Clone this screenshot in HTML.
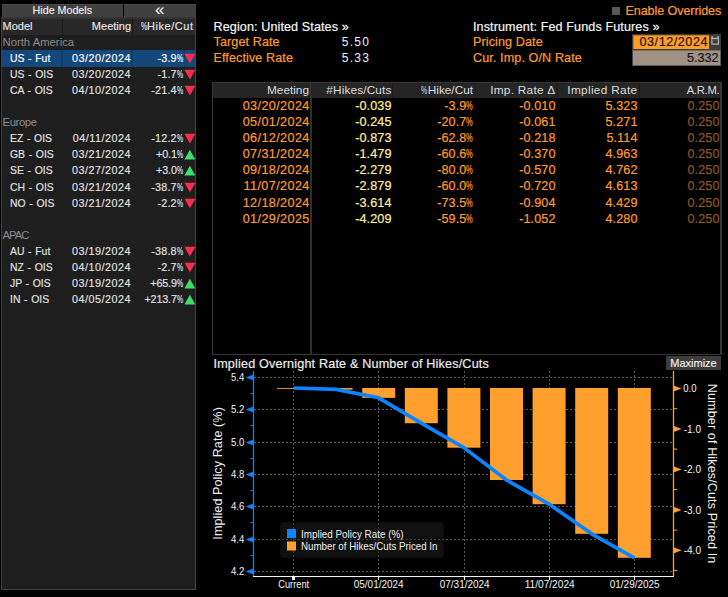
<!DOCTYPE html>
<html lang="en"><head><meta charset="utf-8"><title>World Interest Rate Probability</title>
<style>
html,body{margin:0;padding:0;background:#000;}
body{width:728px;height:597px;position:relative;overflow:hidden;font-family:"Liberation Sans",sans-serif;color:#e6e6e6;}
.a{position:absolute;white-space:nowrap;line-height:16px;height:16px;}
.b{position:absolute;}
.lp{font-size:10.8px;color:#e2e2e2;-webkit-text-stroke:.15px;}
.lh{font-size:11px;color:#e8e8e8;-webkit-text-stroke:.12px;}
.grp{font-size:11.3px;color:#8c8c8c;}
.rt{font-size:12.6px;letter-spacing:.1px;-webkit-text-stroke:.2px;}
.o{color:#ff9d2b;}
.w{color:#f4f4f4;}
.y{color:#fff09a;}
.d{color:#93591c;}
.hd{color:#dedede;font-size:11.8px;}
.pc{display:inline-block;width:6.4px;transform:scaleX(.64);transform-origin:0 50%;}
.pcb{display:inline-block;width:6.6px;transform:scaleX(.59);transform-origin:0 50%;}
</style></head>
<body>
<div class="b" style="left:1px;top:17px;width:195px;height:573px;background:#1e1e1e;box-sizing:border-box;border:1px solid #424242;border-top:2px solid #343434;"></div>
<div class="b" style="left:2px;top:4px;width:121px;height:13px;background:#404040;border-top:1px solid #4b4b4b;box-sizing:border-box;"></div>
<div class="b" style="left:124px;top:4px;width:72px;height:13px;background:#404040;border-top:1px solid #4b4b4b;box-sizing:border-box;"></div>
<div class="a lh" style="left:-37.7px;width:200px;text-align:center;top:1.5px;color:#f2f2f2;font-size:10.7px;letter-spacing:0;">Hide Models</div>
<div class="a lh" style="left:59.8px;width:200px;text-align:center;top:1.8px;color:#f2f2f2;font-size:17px;">&laquo;</div>
<div class="b" style="left:2px;top:19px;width:193px;height:16px;background:#282828;"></div>
<div class="b" style="left:62px;top:19px;width:1px;height:16px;background:#1b1b1b;"></div>
<div class="b" style="left:132px;top:19px;width:1px;height:16px;background:#1b1b1b;"></div>
<div class="a lh" style="left:2.5px;top:18.3px;">Model</div>
<div class="a lh" style="right:597px;text-align:right;top:18.3px;">Meeting</div>
<div class="a lh" style="right:534.4px;text-align:right;top:18.3px;letter-spacing:.55px;"><span class="pc">%</span>Hike/Cut</div>
<div class="b" style="left:2px;top:50px;width:193px;height:16.5px;background:#14477a;"></div>
<div class="b" style="left:61px;top:50px;width:2px;height:16.5px;background:#103d69;"></div>
<div class="b" style="left:131px;top:50px;width:2px;height:16.5px;background:#103d69;"></div>
<div class="b" style="left:184px;top:50px;width:1px;height:16.5px;background:#103d69;"></div>
<div class="a grp" style="left:2.5px;top:34px;">North America</div>
<div class="a lp" style="left:10px;top:50.5px;color:#fff;font-size:10.4px;word-spacing:.8px;">US - Fut</div>
<div class="a lp" style="right:597px;text-align:right;top:50px;color:#fff;letter-spacing:.5px;">03/20/2024</div>
<div class="a lp" style="right:544.8px;text-align:right;top:50px;color:#fff;letter-spacing:.2px;">-3.9<span class="pc">%</span></div>
<svg class="b" style="left:184px;top:50px" width="11" height="16"><polygon points="0.4,3.8 11.4,3.8 5.9,13.6" fill="#f92c50"/></svg>
<div class="a lp" style="left:10px;top:66.5px;font-size:10.4px;word-spacing:.8px;">US - OIS</div>
<div class="a lp" style="right:597px;text-align:right;top:66px;letter-spacing:.5px;">03/20/2024</div>
<div class="a lp" style="right:544.8px;text-align:right;top:66px;letter-spacing:.2px;">-1.7<span class="pc">%</span></div>
<svg class="b" style="left:184px;top:66px" width="11" height="16"><polygon points="0.4,3.8 11.4,3.8 5.9,13.6" fill="#f92c50"/></svg>
<div class="a lp" style="left:10px;top:82.5px;font-size:10.4px;word-spacing:.8px;">CA - OIS</div>
<div class="a lp" style="right:597px;text-align:right;top:82px;letter-spacing:.5px;">04/10/2024</div>
<div class="a lp" style="right:544.8px;text-align:right;top:82px;letter-spacing:.2px;">-21.4<span class="pc">%</span></div>
<svg class="b" style="left:184px;top:82px" width="11" height="16"><polygon points="0.4,3.8 11.4,3.8 5.9,13.6" fill="#f92c50"/></svg>
<div class="a grp" style="left:2.5px;top:114px;letter-spacing:-.4px;">Europe</div>
<div class="a lp" style="left:10px;top:130.5px;font-size:10.4px;word-spacing:.8px;">EZ - OIS</div>
<div class="a lp" style="right:597px;text-align:right;top:130px;letter-spacing:.5px;">04/11/2024</div>
<div class="a lp" style="right:544.8px;text-align:right;top:130px;letter-spacing:.2px;">-12.2<span class="pc">%</span></div>
<svg class="b" style="left:184px;top:130px" width="11" height="16"><polygon points="0.4,3.8 11.4,3.8 5.9,13.6" fill="#f92c50"/></svg>
<div class="a lp" style="left:10px;top:146.5px;font-size:10.4px;word-spacing:.8px;">GB - OIS</div>
<div class="a lp" style="right:597px;text-align:right;top:146px;letter-spacing:.5px;">03/21/2024</div>
<div class="a lp" style="right:544.8px;text-align:right;top:146px;letter-spacing:-.15px;">+0.1<span class="pc">%</span></div>
<svg class="b" style="left:184px;top:146px" width="11" height="16"><polygon points="0.4,13.6 11.4,13.6 5.9,3.8" fill="#3fde68"/></svg>
<div class="a lp" style="left:10px;top:162.5px;font-size:10.4px;word-spacing:.8px;">SE - OIS</div>
<div class="a lp" style="right:597px;text-align:right;top:162px;letter-spacing:.5px;">03/27/2024</div>
<div class="a lp" style="right:544.8px;text-align:right;top:162px;letter-spacing:-.15px;">+3.0<span class="pc">%</span></div>
<svg class="b" style="left:184px;top:162px" width="11" height="16"><polygon points="0.4,13.6 11.4,13.6 5.9,3.8" fill="#3fde68"/></svg>
<div class="a lp" style="left:10px;top:179.5px;font-size:10.4px;word-spacing:.8px;">CH - OIS</div>
<div class="a lp" style="right:597px;text-align:right;top:179px;letter-spacing:.5px;">03/21/2024</div>
<div class="a lp" style="right:544.8px;text-align:right;top:179px;letter-spacing:.2px;">-38.7<span class="pc">%</span></div>
<svg class="b" style="left:184px;top:179px" width="11" height="16"><polygon points="0.4,3.8 11.4,3.8 5.9,13.6" fill="#f92c50"/></svg>
<div class="a lp" style="left:10px;top:195.5px;font-size:10.4px;word-spacing:.8px;">NO - OIS</div>
<div class="a lp" style="right:597px;text-align:right;top:195px;letter-spacing:.5px;">03/21/2024</div>
<div class="a lp" style="right:544.8px;text-align:right;top:195px;letter-spacing:.2px;">-2.2<span class="pc">%</span></div>
<svg class="b" style="left:184px;top:195px" width="11" height="16"><polygon points="0.4,3.8 11.4,3.8 5.9,13.6" fill="#f92c50"/></svg>
<div class="a grp" style="left:2.5px;top:227px;letter-spacing:-1px;">APAC</div>
<div class="a lp" style="left:10px;top:243.5px;font-size:10.4px;word-spacing:.8px;">AU - Fut</div>
<div class="a lp" style="right:597px;text-align:right;top:243px;letter-spacing:.5px;">03/19/2024</div>
<div class="a lp" style="right:544.8px;text-align:right;top:243px;letter-spacing:.2px;">-38.8<span class="pc">%</span></div>
<svg class="b" style="left:184px;top:243px" width="11" height="16"><polygon points="0.4,3.8 11.4,3.8 5.9,13.6" fill="#f92c50"/></svg>
<div class="a lp" style="left:10px;top:259.5px;font-size:10.4px;word-spacing:.8px;">NZ - OIS</div>
<div class="a lp" style="right:597px;text-align:right;top:259px;letter-spacing:.5px;">04/10/2024</div>
<div class="a lp" style="right:544.8px;text-align:right;top:259px;letter-spacing:.2px;">-2.7<span class="pc">%</span></div>
<svg class="b" style="left:184px;top:259px" width="11" height="16"><polygon points="0.4,3.8 11.4,3.8 5.9,13.6" fill="#f92c50"/></svg>
<div class="a lp" style="left:10px;top:275.5px;font-size:10.4px;word-spacing:.8px;">JP - OIS</div>
<div class="a lp" style="right:597px;text-align:right;top:275px;letter-spacing:.5px;">03/19/2024</div>
<div class="a lp" style="right:544.8px;text-align:right;top:275px;letter-spacing:-.15px;">+65.9<span class="pc">%</span></div>
<svg class="b" style="left:184px;top:275px" width="11" height="16"><polygon points="0.4,13.6 11.4,13.6 5.9,3.8" fill="#3fde68"/></svg>
<div class="a lp" style="left:10px;top:291.5px;font-size:10.4px;word-spacing:.8px;">IN - OIS</div>
<div class="a lp" style="right:597px;text-align:right;top:291px;letter-spacing:.5px;">04/05/2024</div>
<div class="a lp" style="right:544.8px;text-align:right;top:291px;letter-spacing:-.15px;">+213.7<span class="pc">%</span></div>
<svg class="b" style="left:184px;top:291px" width="11" height="16"><polygon points="0.4,13.6 11.4,13.6 5.9,3.8" fill="#3fde68"/></svg>
<div class="b" style="left:612px;top:7px;width:8px;height:8px;background:#585858;"></div>
<div class="a rt o" style="right:6.8px;text-align:right;top:2.5px;letter-spacing:-.1px;">Enable Overrides</div>
<div class="a rt w" style="left:213.5px;top:18.5px;">Region: United States &raquo;</div>
<div class="a rt o" style="left:213.5px;top:34px;">Target Rate</div>
<div class="a rt o" style="left:213.5px;top:50px;">Effective Rate</div>
<div class="a rt" style="left:341.8px;top:34px;letter-spacing:1.25px;color:#f0f0f0;font-size:12px;-webkit-text-stroke:0;">5.50</div>
<div class="a rt" style="left:341.8px;top:50px;letter-spacing:1.25px;color:#f0f0f0;font-size:12px;-webkit-text-stroke:0;">5.33</div>
<div class="a rt w" style="left:473px;top:18.5px;">Instrument: Fed Funds Futures &raquo;</div>
<div class="a rt o" style="left:473px;top:34px;">Pricing Date</div>
<div class="a rt o" style="left:473px;top:50px;">Cur. Imp. O/N Rate</div>
<div class="b" style="left:632px;top:34px;width:89px;height:16px;background:#3c3c3c;"></div>
<div class="b" style="left:633px;top:35px;width:76px;height:14px;background:#ff9d2b;border-top:1px solid #c97a1e;border-left:1px solid #c97a1e;box-sizing:border-box;"></div>
<div class="a rt" style="right:20px;text-align:right;top:33.5px;color:#1c1208;letter-spacing:.55px;">03/12/2024</div>
<svg class="b" style="left:710px;top:34px" width="11" height="16"><rect x="1.9" y="4.4" width="6.5" height="5.7" fill="none" stroke="#b4b4b4" stroke-width="1.2"/><rect x="1.3" y="2.2" width="1.5" height="2.4" fill="#b4b4b4"/><rect x="7.4" y="2.2" width="1.5" height="2.4" fill="#b4b4b4"/><rect x="2.5" y="5.6" width="5.3" height="0.9" fill="#5a5a5a"/></svg>
<div class="b" style="left:632px;top:50px;width:89px;height:16px;background:#a09182;box-sizing:border-box;border:1px solid #5a5a5a;border-top-color:#6e6e6e;border-left-color:#444;"></div>
<div class="a rt" style="right:9.5px;text-align:right;top:49.6px;color:#14141e;letter-spacing:0;">5.332</div>
<div class="b" style="left:212px;top:82px;width:510px;height:273px;background:#000;box-sizing:border-box;border:1px solid #363636;border-right-width:2px;"></div>
<div class="b" style="left:213px;top:83px;width:507px;height:15px;background:#252525;"></div>
<div class="b" style="left:310px;top:83px;width:1px;height:15px;background:#3a3a3a;"></div>
<div class="b" style="left:310px;top:98px;width:2px;height:256px;background:#303030;"></div>
<div class="b" style="left:392px;top:83px;width:1px;height:15px;background:#1d1d1d;"></div>
<div class="b" style="left:474.5px;top:83px;width:1px;height:15px;background:#1d1d1d;"></div>
<div class="b" style="left:556.5px;top:83px;width:1px;height:15px;background:#1d1d1d;"></div>
<div class="b" style="left:638.5px;top:83px;width:1px;height:15px;background:#1d1d1d;"></div>
<div class="a hd" style="right:419px;text-align:right;top:82px;letter-spacing:0px;">Meeting</div>
<div class="a hd" style="right:336.5px;text-align:right;top:82px;letter-spacing:0.15px;">#Hikes/Cuts</div>
<div class="a hd" style="right:255px;text-align:right;top:82px;letter-spacing:0px;"><span class="pcb">%</span>Hike/Cut</div>
<div class="a hd" style="right:172.5px;text-align:right;top:82px;letter-spacing:0.27px;">Imp. Rate &Delta;</div>
<div class="a hd" style="right:90.5px;text-align:right;top:82px;letter-spacing:0.33px;">Implied Rate</div>
<div class="a hd" style="right:8.7px;text-align:right;top:82px;letter-spacing:-0.25px;font-size:11.2px;">A.R.M.</div>
<div class="a rt o" style="right:418.3px;text-align:right;top:98px;letter-spacing:.4px;">03/20/2024</div>
<div class="a rt y" style="right:336.5px;text-align:right;top:98px;">-0.039</div>
<div class="a rt o" style="right:255px;text-align:right;top:98px;">-3.9<span class="pcb">%</span></div>
<div class="a rt o" style="right:172.5px;text-align:right;top:98px;">-0.010</div>
<div class="a rt o" style="right:90.5px;text-align:right;top:98px;">5.323</div>
<div class="a rt d" style="right:8.5px;text-align:right;top:98px;">0.250</div>
<div class="a rt o" style="right:418.3px;text-align:right;top:114px;letter-spacing:.4px;">05/01/2024</div>
<div class="a rt y" style="right:336.5px;text-align:right;top:114px;">-0.245</div>
<div class="a rt o" style="right:255px;text-align:right;top:114px;">-20.7<span class="pcb">%</span></div>
<div class="a rt o" style="right:172.5px;text-align:right;top:114px;">-0.061</div>
<div class="a rt o" style="right:90.5px;text-align:right;top:114px;">5.271</div>
<div class="a rt d" style="right:8.5px;text-align:right;top:114px;">0.250</div>
<div class="a rt o" style="right:418.3px;text-align:right;top:130px;letter-spacing:.4px;">06/12/2024</div>
<div class="a rt y" style="right:336.5px;text-align:right;top:130px;">-0.873</div>
<div class="a rt o" style="right:255px;text-align:right;top:130px;">-62.8<span class="pcb">%</span></div>
<div class="a rt o" style="right:172.5px;text-align:right;top:130px;">-0.218</div>
<div class="a rt o" style="right:90.5px;text-align:right;top:130px;">5.114</div>
<div class="a rt d" style="right:8.5px;text-align:right;top:130px;">0.250</div>
<div class="a rt o" style="right:418.3px;text-align:right;top:146px;letter-spacing:.4px;">07/31/2024</div>
<div class="a rt y" style="right:336.5px;text-align:right;top:146px;">-1.479</div>
<div class="a rt o" style="right:255px;text-align:right;top:146px;">-60.6<span class="pcb">%</span></div>
<div class="a rt o" style="right:172.5px;text-align:right;top:146px;">-0.370</div>
<div class="a rt o" style="right:90.5px;text-align:right;top:146px;">4.963</div>
<div class="a rt d" style="right:8.5px;text-align:right;top:146px;">0.250</div>
<div class="a rt o" style="right:418.3px;text-align:right;top:162px;letter-spacing:.4px;">09/18/2024</div>
<div class="a rt y" style="right:336.5px;text-align:right;top:162px;">-2.279</div>
<div class="a rt o" style="right:255px;text-align:right;top:162px;">-80.0<span class="pcb">%</span></div>
<div class="a rt o" style="right:172.5px;text-align:right;top:162px;">-0.570</div>
<div class="a rt o" style="right:90.5px;text-align:right;top:162px;">4.762</div>
<div class="a rt d" style="right:8.5px;text-align:right;top:162px;">0.250</div>
<div class="a rt o" style="right:418.3px;text-align:right;top:178px;letter-spacing:.4px;">11/07/2024</div>
<div class="a rt y" style="right:336.5px;text-align:right;top:178px;">-2.879</div>
<div class="a rt o" style="right:255px;text-align:right;top:178px;">-60.0<span class="pcb">%</span></div>
<div class="a rt o" style="right:172.5px;text-align:right;top:178px;">-0.720</div>
<div class="a rt o" style="right:90.5px;text-align:right;top:178px;">4.613</div>
<div class="a rt d" style="right:8.5px;text-align:right;top:178px;">0.250</div>
<div class="a rt o" style="right:418.3px;text-align:right;top:195px;letter-spacing:.4px;">12/18/2024</div>
<div class="a rt y" style="right:336.5px;text-align:right;top:195px;">-3.614</div>
<div class="a rt o" style="right:255px;text-align:right;top:195px;">-73.5<span class="pcb">%</span></div>
<div class="a rt o" style="right:172.5px;text-align:right;top:195px;">-0.904</div>
<div class="a rt o" style="right:90.5px;text-align:right;top:195px;">4.429</div>
<div class="a rt d" style="right:8.5px;text-align:right;top:195px;">0.250</div>
<div class="a rt o" style="right:418.3px;text-align:right;top:211px;letter-spacing:.4px;">01/29/2025</div>
<div class="a rt y" style="right:336.5px;text-align:right;top:211px;">-4.209</div>
<div class="a rt o" style="right:255px;text-align:right;top:211px;">-59.5<span class="pcb">%</span></div>
<div class="a rt o" style="right:172.5px;text-align:right;top:211px;">-1.052</div>
<div class="a rt o" style="right:90.5px;text-align:right;top:211px;">4.280</div>
<div class="a rt d" style="right:8.5px;text-align:right;top:211px;">0.250</div>
<div class="a rt" style="left:213.5px;top:355.5px;color:#ececec;letter-spacing:.18px;">Implied Overnight Rate &amp; Number of Hikes/Cuts</div>
<div class="b" style="left:666px;top:356px;width:55px;height:14px;background:#3c3c3c;"></div>
<div class="a lh" style="left:593.5px;width:200px;text-align:center;top:355px;color:#f2f2f2;font-size:11px;">Maximize</div>
<svg class="b" style="left:0;top:340px" width="728" height="257" viewBox="0 340 728 257" font-family="Liberation Sans, sans-serif">
<g stroke="#5c5c5c" stroke-width="1" stroke-dasharray="2 2" shape-rendering="crispEdges" fill="none">
<path d="M254 377.5H673"/>
<path d="M254 409.5H673"/>
<path d="M254 442.5H673"/>
<path d="M254 474.5H673"/>
<path d="M254 506.5H673"/>
<path d="M254 539.5H673"/>
<path d="M254 571.5H673"/>
<path d="M293.5 371V576"/>
<path d="M378.5 371V576"/>
<path d="M464.5 371V576"/>
<path d="M549.5 371V576"/>
<path d="M634.5 371V576"/>
</g>
<rect x="277.0" y="388" width="33" height="0.9" fill="#ff9f2e"/>
<rect x="319.6" y="388" width="33" height="1.6" fill="#ff9f2e"/>
<rect x="362.2" y="388" width="33" height="9.9" fill="#ff9f2e"/>
<rect x="404.8" y="388" width="33" height="35.2" fill="#ff9f2e"/>
<rect x="447.4" y="388" width="33" height="59.7" fill="#ff9f2e"/>
<rect x="490.0" y="388" width="33" height="92.0" fill="#ff9f2e"/>
<rect x="532.6" y="388" width="33" height="116.2" fill="#ff9f2e"/>
<rect x="575.2" y="388" width="33" height="145.8" fill="#ff9f2e"/>
<rect x="617.8" y="388" width="33" height="169.8" fill="#ff9f2e"/>
<rect x="280.3" y="522.2" width="163.4" height="35.5" rx="3" fill="#202020" fill-opacity=".5"/>
<polyline points="293.5,388.0 336.1,389.4 378.7,397.8 421.3,423.2 463.9,447.6 506.5,480.0 549.1,504.1 591.7,533.8 634.3,557.9" fill="none" stroke="#0c84ff" stroke-width="3.7" stroke-linejoin="round"/>
<rect x="287" y="529" width="9" height="9" fill="#0c84ff"/><rect x="287" y="541.5" width="9" height="9" fill="#ff9f2e"/>
<text x="301" y="538.2" font-size="10.4" fill="#f0f0f0" textLength="102.5" lengthAdjust="spacingAndGlyphs">Implied Policy Rate (%)</text>
<text x="301" y="550.2" font-size="10.4" fill="#f0f0f0" textLength="136.5" lengthAdjust="spacingAndGlyphs">Number of Hikes/Cuts Priced In</text>
<path d="M253.5 371V576" stroke="#0c84ff" stroke-width="1.3"/>
<polygon points="253.5,374.4 253.5,380.6 245.6,377.5" fill="#0c84ff"/>
<text x="244.3" y="381.3" font-size="10.5" fill="#f4f4f4" text-anchor="end" textLength="13.3" lengthAdjust="spacingAndGlyphs">5.4</text>
<path d="M250.3 393.6H253.5" stroke="#0c84ff" stroke-width="1"/>
<polygon points="253.5,406.4 253.5,412.6 245.6,409.5" fill="#0c84ff"/>
<text x="244.3" y="413.3" font-size="10.5" fill="#f4f4f4" text-anchor="end" textLength="13.3" lengthAdjust="spacingAndGlyphs">5.2</text>
<path d="M250.3 425.6H253.5" stroke="#0c84ff" stroke-width="1"/>
<polygon points="253.5,439.4 253.5,445.6 245.6,442.5" fill="#0c84ff"/>
<text x="244.3" y="446.3" font-size="10.5" fill="#f4f4f4" text-anchor="end" textLength="13.3" lengthAdjust="spacingAndGlyphs">5.0</text>
<path d="M250.3 458.6H253.5" stroke="#0c84ff" stroke-width="1"/>
<polygon points="253.5,471.4 253.5,477.6 245.6,474.5" fill="#0c84ff"/>
<text x="244.3" y="478.3" font-size="10.5" fill="#f4f4f4" text-anchor="end" textLength="13.3" lengthAdjust="spacingAndGlyphs">4.8</text>
<path d="M250.3 490.6H253.5" stroke="#0c84ff" stroke-width="1"/>
<polygon points="253.5,503.4 253.5,509.6 245.6,506.5" fill="#0c84ff"/>
<text x="244.3" y="510.3" font-size="10.5" fill="#f4f4f4" text-anchor="end" textLength="13.3" lengthAdjust="spacingAndGlyphs">4.6</text>
<path d="M250.3 522.6H253.5" stroke="#0c84ff" stroke-width="1"/>
<polygon points="253.5,536.4 253.5,542.6 245.6,539.5" fill="#0c84ff"/>
<text x="244.3" y="543.3" font-size="10.5" fill="#f4f4f4" text-anchor="end" textLength="13.3" lengthAdjust="spacingAndGlyphs">4.4</text>
<path d="M250.3 555.6H253.5" stroke="#0c84ff" stroke-width="1"/>
<polygon points="253.5,568.4 253.5,574.6 245.6,571.5" fill="#0c84ff"/>
<text x="244.3" y="575.3" font-size="10.5" fill="#f4f4f4" text-anchor="end" textLength="13.3" lengthAdjust="spacingAndGlyphs">4.2</text>
<path d="M673.5 371V576" stroke="#ff9f2e" stroke-width="1.3"/>
<polygon points="673.5,385.4 673.5,391.6 681.6,388.5" fill="#ff9f2e"/>
<text x="683.3" y="392.3" font-size="10.5" fill="#f4f4f4" textLength="13.3" lengthAdjust="spacingAndGlyphs">0.0</text>
<path d="M673.5 408.7H677.3" stroke="#ff9f2e" stroke-width="1"/>
<polygon points="673.5,425.8 673.5,432.1 681.6,428.9" fill="#ff9f2e"/>
<text x="683.7" y="432.8" font-size="10.5" fill="#f4f4f4" textLength="17.3" lengthAdjust="spacingAndGlyphs">-1.0</text>
<path d="M673.5 449.1H677.3" stroke="#ff9f2e" stroke-width="1"/>
<polygon points="673.5,466.3 673.5,472.5 681.6,469.4" fill="#ff9f2e"/>
<text x="683.7" y="473.2" font-size="10.5" fill="#f4f4f4" textLength="17.3" lengthAdjust="spacingAndGlyphs">-2.0</text>
<path d="M673.5 489.6H677.3" stroke="#ff9f2e" stroke-width="1"/>
<polygon points="673.5,506.8 673.5,513.0 681.6,509.9" fill="#ff9f2e"/>
<text x="683.7" y="513.6" font-size="10.5" fill="#f4f4f4" textLength="17.3" lengthAdjust="spacingAndGlyphs">-3.0</text>
<path d="M673.5 530.1H677.3" stroke="#ff9f2e" stroke-width="1"/>
<polygon points="673.5,547.2 673.5,553.4 681.6,550.3" fill="#ff9f2e"/>
<text x="683.7" y="554.1" font-size="10.5" fill="#f4f4f4" textLength="17.3" lengthAdjust="spacingAndGlyphs">-4.0</text>
<path d="M673.5 570.5H677.3" stroke="#ff9f2e" stroke-width="1"/>
<path d="M253 576.5H674" stroke="#f4f4f4" stroke-width="1.2"/>
<path d="M293.5 576V580" stroke="#f4f4f4" stroke-width="3"/>
<text x="293.7" y="587.8" font-size="10.3" fill="#f4f4f4" text-anchor="middle" textLength="30.8" lengthAdjust="spacingAndGlyphs">Current</text>
<path d="M378.5 576V580" stroke="#f4f4f4" stroke-width="1.2"/>
<text x="378.7" y="587.8" font-size="10.3" fill="#f4f4f4" text-anchor="middle" textLength="50" lengthAdjust="spacingAndGlyphs">05/01/2024</text>
<path d="M464.5 576V580" stroke="#f4f4f4" stroke-width="1.2"/>
<text x="464.7" y="587.8" font-size="10.3" fill="#f4f4f4" text-anchor="middle" textLength="50" lengthAdjust="spacingAndGlyphs">07/31/2024</text>
<path d="M549.5 576V580" stroke="#f4f4f4" stroke-width="1.2"/>
<text x="549.7" y="587.8" font-size="10.3" fill="#f4f4f4" text-anchor="middle" textLength="50" lengthAdjust="spacingAndGlyphs">11/07/2024</text>
<path d="M634.5 576V580" stroke="#f4f4f4" stroke-width="1.2"/>
<text x="634.7" y="587.8" font-size="10.3" fill="#f4f4f4" text-anchor="middle" textLength="50" lengthAdjust="spacingAndGlyphs">01/29/2025</text>
<text transform="translate(221.7,473.4) rotate(-90)" font-size="12.6" fill="#f0f0f0" text-anchor="middle" textLength="132.5" lengthAdjust="spacing">Implied Policy Rate (%)</text>
<text transform="translate(708,473.5) rotate(90)" font-size="12.6" fill="#f0f0f0" text-anchor="middle" textLength="179.5" lengthAdjust="spacing">Number of Hikes/Cuts Priced In</text>
</svg>
</body></html>
